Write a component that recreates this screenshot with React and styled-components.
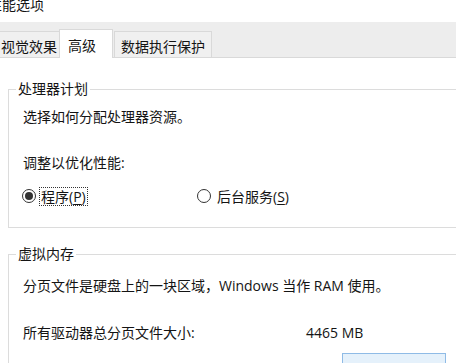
import React from "react";
import styled, { createGlobalStyle } from "styled-components";

const Global = createGlobalStyle`
  html, body { margin: 0; padding: 0; background: #fff; overflow: hidden; }
  body { font-family: "Open Sans", "Noto Sans CJK SC", sans-serif; font-size: 14px; color: #141414; }
  #root { width: 456px; height: 363px; overflow: hidden; }
`;

const Window = styled.div`
  width: 456px;
  height: 363px;
  background: #fff;
  overflow: hidden;
`;

const TitleBar = styled.div`
  height: 22px;
  overflow: hidden;
`;

const Title = styled.div`
  margin: -5px 0 0 -12px;
  line-height: 20px;
  white-space: nowrap;
`;

const TabStrip = styled.div`
  display: flex;
  align-items: flex-end;
  height: 35px;
  background: #ededed;
  border-bottom: 1px solid #d9d9d9;
`;

const Tab = styled.div`
  box-sizing: border-box;
  flex: none;
  height: ${(p) => (p.$active ? "29px" : "26px")};
  margin-left: ${(p) => p.$ml}px;
  margin-bottom: ${(p) => (p.$active ? "-1px" : "0")};
  padding: ${(p) => (p.$active ? "6px 16px 0 8px" : "5px 6px 0 6px")};
  line-height: 20px;
  white-space: nowrap;
  background: ${(p) => (p.$active ? "#fff" : "#f0f0f0")};
  border: 1px solid #d9d9d9;
  border-bottom: none;
  position: relative;
  z-index: ${(p) => (p.$active ? 1 : 0)};
`;

const Panel = styled.div`
  padding-top: 23px;
`;

const Group = styled.fieldset`
  margin: ${(p) => p.$mt}px -40px 0 8px;
  padding: 0 0 ${(p) => p.$pb}px 14px;
  border: 1px solid #dcdcdc;
  min-width: 0;
`;

const Legend = styled.legend`
  margin-left: -7px;
  padding: 0 2px;
  line-height: 16px;
`;

const Line = styled.div`
  line-height: 20px;
  margin-top: ${(p) => p.$mt}px;
  white-space: nowrap;
`;

const RadioRow = styled.div`
  display: flex;
  align-items: center;
  height: 20px;
  margin-top: 13px;
`;

const RadioItem = styled.label`
  display: flex;
  align-items: center;
  width: ${(p) => (p.$w ? `${p.$w}px` : "auto")};
  margin-left: -1px;
`;

const Circle = styled.span`
  box-sizing: border-box;
  width: 14px;
  height: 14px;
  border-radius: 50%;
  border: 1px solid #333;
  background: #fff;
  display: flex;
  align-items: center;
  justify-content: center;
  flex: none;
  &::after {
    content: "";
    display: ${(p) => (p.$on ? "block" : "none")};
    width: 8px;
    height: 8px;
    border-radius: 50%;
    background: #333;
  }
`;

const RadioText = styled.span`
  margin-left: ${(p) => (p.$focus ? 3 : 4)}px;
  line-height: 17px;
  padding: 0 1px;
  border: 1px ${(p) => (p.$focus ? "dotted #333" : "solid transparent")};
  white-space: nowrap;
  u { text-decoration: underline; text-underline-offset: 2px; }
`;

const InfoRow = styled.div`
  display: flex;
  line-height: 20px;
  margin-top: 27px;
  white-space: nowrap;
`;

const InfoLabel = styled.span`
  width: 283px;
  flex: none;
`;

const ButtonRow = styled.div`
  padding-left: 319px;
  margin-top: 10px;
`;

const Button = styled.button`
  display: block;
  width: 104px;
  height: 26px;
  background: #e5f1fb;
  border: 1px solid #8fbbe6;
  font: inherit;
  padding: 0;
`;

export default function App() {
  return (
    <Window>
      <Global />
      <TitleBar>
        <Title>性能选项</Title>
      </TitleBar>
      <TabStrip>
        <Tab $ml={-6}>视觉效果</Tab>
        <Tab $active $ml={-5}>高级</Tab>
        <Tab $ml={1}>数据执行保护</Tab>
      </TabStrip>
      <Panel>
        <Group $mt={0} $pb={21}>
          <Legend>处理器计划</Legend>
          <Line $mt={10}>选择如何分配处理器资源。</Line>
          <Line $mt={26}>调整以优化性能:</Line>
          <RadioRow>
            <RadioItem $w={176}>
              <Circle $on />
              <RadioText $focus>
                程序(<u>P</u>)
              </RadioText>
            </RadioItem>
            <RadioItem>
              <Circle />
              <RadioText>
                后台服务(<u>S</u>)
              </RadioText>
            </RadioItem>
          </RadioRow>
        </Group>
        <Group $mt={18} $pb={10}>
          <Legend>虚拟内存</Legend>
          <Line $mt={14}>分页文件是硬盘上的一块区域，Windows 当作 RAM 使用。</Line>
          <InfoRow>
            <InfoLabel>所有驱动器总分页文件大小:</InfoLabel>
            <span>4465 MB</span>
          </InfoRow>
          <ButtonRow>
            <Button aria-label="更改" />
          </ButtonRow>
        </Group>
      </Panel>
    </Window>
  );
}
